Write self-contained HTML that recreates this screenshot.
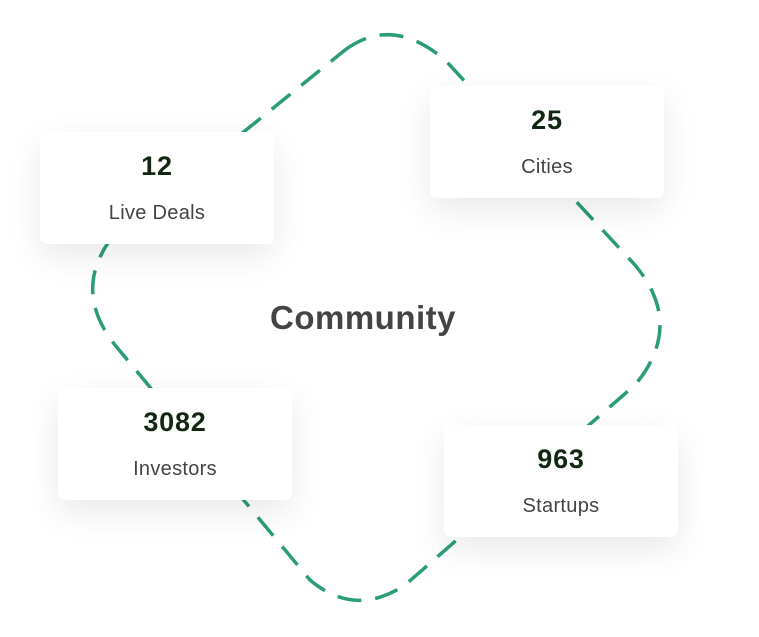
<!DOCTYPE html>
<html><head><meta charset="utf-8"><style>
html,body{margin:0;padding:0;background:#fff;width:759px;height:637px;overflow:hidden;font-family:"Liberation Sans",sans-serif;}
.wrap{position:relative;width:759px;height:637px;}
svg{position:absolute;left:0;top:0;}
.card{position:absolute;width:234px;height:112px;background:#fff;border-radius:7px;box-shadow:0 12px 34px rgba(0,0,0,0.09);text-align:center;}
.num{position:absolute;left:0;right:0;top:19px;font-size:27px;font-weight:bold;color:#122712;letter-spacing:0.8px;}
.lbl{position:absolute;left:0;right:0;top:70px;font-size:20px;color:#444;letter-spacing:0.3px;}
.title{position:absolute;left:215px;width:296px;top:299px;text-align:center;font-size:33px;font-weight:bold;color:#444;letter-spacing:0.5px;}
</style></head><body><div class="wrap">
<svg width="759" height="637"><path d="M 345,50 Q 392,15 445,60 L 635,265 Q 685,325 635,385 L 405,585 Q 355,618 310,580 L 115,345 Q 73,292 110,240 Z" fill="none" stroke="#2a9d78" stroke-width="3.5" stroke-dasharray="24 14"/></svg>
<div class="card" style="left:40px;top:132px"><div class="num">12</div><div class="lbl">Live Deals</div></div>
<div class="card" style="left:430px;top:86px"><div class="num">25</div><div class="lbl">Cities</div></div>
<div class="card" style="left:58px;top:388px"><div class="num">3082</div><div class="lbl">Investors</div></div>
<div class="card" style="left:444px;top:425px"><div class="num">963</div><div class="lbl">Startups</div></div>
<div class="title">Community</div>
</div></body></html>
